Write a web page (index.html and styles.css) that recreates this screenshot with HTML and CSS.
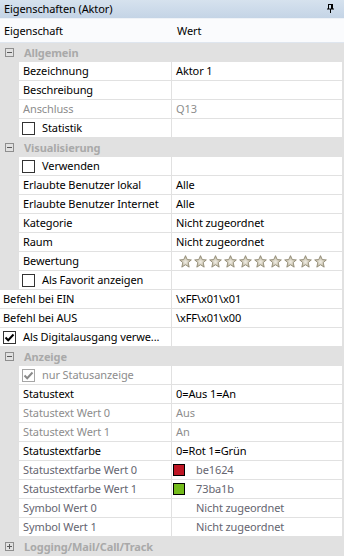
FILE: index.html
```html
<!DOCTYPE html>
<html lang="de">
<head>
    <meta charset="UTF-8">
    <meta name="viewport" content="width=device-width, initial-scale=1.0">
    <title>Eigenschaften (Aktor)</title>
    <link rel="stylesheet" href="styles.css">
</head>
<body>
    <div class="panel">
        <div class="title">
            <span>Eigenschaften (Aktor)</span>
            <svg class="pin" width="9" height="9" viewBox="0 0 9 9"><path d="M2 0.5H7M2.5 0.5V5M6.5 0.5V5M1 5H8M4.5 5V9M5.5 1V5" stroke="#000" fill="none"/></svg>
        </div>
        <div class="head">
            <div class="name">Eigenschaft</div>
            <div class="val">Wert</div>
        </div>

        <!-- Allgemein -->
        <div class="cat"><span class="tog minus"></span>Allgemein</div>
        <div class="row sub"><div class="name">Bezeichnung</div><div class="val">Aktor 1</div></div>
        <div class="row sub"><div class="name">Beschreibung</div><div class="val"></div></div>
        <div class="row sub dis"><div class="name">Anschluss</div><div class="val">Q13</div></div>
        <div class="row sub"><div class="name"><span class="cb"></span>Statistik</div><div class="val"></div></div>

        <!-- Visualisierung -->
        <div class="cat"><span class="tog minus"></span>Visualisierung</div>
        <div class="row sub"><div class="name"><span class="cb"></span>Verwenden</div><div class="val"></div></div>
        <div class="row sub"><div class="name">Erlaubte Benutzer lokal</div><div class="val">Alle</div></div>
        <div class="row sub"><div class="name">Erlaubte Benutzer Internet</div><div class="val">Alle</div></div>
        <div class="row sub"><div class="name">Kategorie</div><div class="val">Nicht zugeordnet</div></div>
        <div class="row sub"><div class="name">Raum</div><div class="val">Nicht zugeordnet</div></div>
        <div class="row sub"><div class="name">Bewertung</div><div class="val stars" id="stars"></div></div>
        <div class="row sub"><div class="name"><span class="cb"></span>Als Favorit anzeigen</div><div class="val"></div></div>

        <div class="row"><div class="name">Befehl bei EIN</div><div class="val">\xFF\x01\x01</div></div>
        <div class="row"><div class="name">Befehl bei AUS</div><div class="val">\xFF\x01\x00</div></div>
        <div class="row top-cb"><div class="name"><span class="cb checked"><svg width="11" height="11" viewBox="0 0 11 11"><path d="M1.5 5.5L4.2 8.2L9.5 2.5" stroke="#000" stroke-width="2" fill="none"/></svg></span>Als Digitalausgang verwe...</div><div class="val"></div></div>

        <!-- Anzeige -->
        <div class="cat"><span class="tog minus"></span>Anzeige</div>
        <div class="row sub dis"><div class="name"><span class="cb checked"><svg width="11" height="11" viewBox="0 0 11 11"><path d="M1.5 5.5L4.2 8.2L9.5 2.5" stroke="#8a8a8a" stroke-width="2" fill="none"/></svg></span>nur Statusanzeige</div><div class="val"></div></div>
        <div class="row sub"><div class="name">Statustext</div><div class="val">0=Aus 1=An</div></div>
        <div class="row sub dis"><div class="name">Statustext Wert 0</div><div class="val">Aus</div></div>
        <div class="row sub dis"><div class="name">Statustext Wert 1</div><div class="val">An</div></div>
        <div class="row sub"><div class="name">Statustextfarbe</div><div class="val">0=Rot 1=Grün</div></div>
        <div class="row sub dim"><div class="name">Statustextfarbe Wert 0</div><div class="val"><span class="swatch red"></span>be1624</div></div>
        <div class="row sub dim"><div class="name">Statustextfarbe Wert 1</div><div class="val"><span class="swatch green"></span>73ba1b</div></div>
        <div class="row sub dim"><div class="name">Symbol Wert 0</div><div class="val"><span class="swatch none"></span>Nicht zugeordnet</div></div>
        <div class="row sub dim"><div class="name">Symbol Wert 1</div><div class="val"><span class="swatch none"></span>Nicht zugeordnet</div></div>

        <div class="cat"><span class="tog plus"></span>Logging/Mail/Call/Track</div>
    </div>
    <script>
        // zehn Sterne fuer die Bewertung
        var star='<svg width="13" height="13" viewBox="0 0 12 12"><defs><radialGradient id="sg" cx="50%" cy="55%" r="55%"><stop offset="0" stop-color="#f2efe6"/><stop offset="1" stop-color="#b3ab92"/></radialGradient></defs><polygon points="6,0.6 7.6,4.2 11.4,4.5 8.5,7 9.4,11.2 6,9 2.6,11.2 3.5,7 0.6,4.5 4.4,4.2" fill="url(#sg)" stroke="#8d8670" stroke-width="0.8"/></svg>';
        var html="";
        for(var i=0;i<10;i++){
            html+=star;
        }
        document.getElementById("stars").innerHTML=html;
    </script>
</body>
</html>
```

FILE: styles.css
```css
*{
    padding: 0;
    margin: 0;
    box-sizing: border-box;
}
body{
    background: #fff;
    font-family: "Noto Sans", "Open Sans", sans-serif;
    font-size: 11px;
    letter-spacing: -0.1px;
    color: #000;
}
.panel{
    width: 344px;
    height: 556px;
    background: #e1e1e1;
    overflow: hidden;
}
.title{
    display: flex;
    align-items: center;
    justify-content: space-between;
    height: 19px;
    padding: 0 9px 1px 4px;
    background: linear-gradient(#d6e2ee, #c4d4e6);
    border-bottom: 1px solid #eef2f7;
}
.head{
    display: flex;
    height: 24px;
    background: #fafbfd;
    border-bottom: 1px solid #dfe6ef;
    padding-right: 2px;
}
.head .name{
    width: 172px;
    padding-left: 4px;
    line-height: 23px;
}
.head .val{
    flex: 1;
    padding-left: 5px;
    line-height: 23px;
}
.cat{
    display: flex;
    align-items: center;
    height: 19px;
    padding: 0 0 1px 5px;
    font-weight: bold;
    color: #a9a9a9;
    background: #e1e1e1;
}
.tog{
    position: relative;
    width: 9px;
    height: 9px;
    margin: 1px 10px 0 0;
    border: 1px solid #8e8e8e;
}
.tog::before{
    content: "";
    position: absolute;
    left: 1px;
    top: 3px;
    width: 5px;
    height: 1px;
    background: #5a5a5a;
}
.tog.plus::after{
    content: "";
    position: absolute;
    left: 3px;
    top: 1px;
    width: 1px;
    height: 5px;
    background: #5a5a5a;
}
.row{
    display: flex;
    gap: 1px;
    height: 19px;
    padding: 0 2px 1px 0;
}
.row.sub{
    padding-left: 19px;
}
.row .name{
    display: flex;
    align-items: center;
    width: 171px;
    padding: 0 0 1px 3px;
    background: #fff;
    white-space: nowrap;
    overflow: hidden;
}
.row.sub .name{
    width: 152px;
    padding-left: 4px;
}
.row .val{
    display: flex;
    align-items: center;
    flex: 1;
    padding: 0 0 1px 4px;
    background: #fff;
    white-space: nowrap;
}
.dis .name, .dis .val{
    color: #8d8d8d;
}
.dim .name, .dim .val{
    color: #656570;
}
.cb{
    display: inline-flex;
    align-items: center;
    justify-content: center;
    width: 13px;
    height: 13px;
    margin: 1px 7px 0 0;
    border: 1px solid #333;
    background: #fff;
}
.row.sub .name .cb{
    margin-left: -1px;
}
.dis .cb{
    border-color: #a6a6a6;
}
.stars{
    gap: 2px;
    padding: 1px 0 0 7px !important;
}
.stars svg{
    display: block;
}
.swatch{
    width: 12px;
    height: 12px;
    margin: 1px 11px 0 -3px;
    border: 1px solid #000;
}
.swatch.red{
    background: #be1624;
}
.swatch.green{
    background: #73ba1b;
}
.swatch.none{
    border-color: transparent;
}
```
